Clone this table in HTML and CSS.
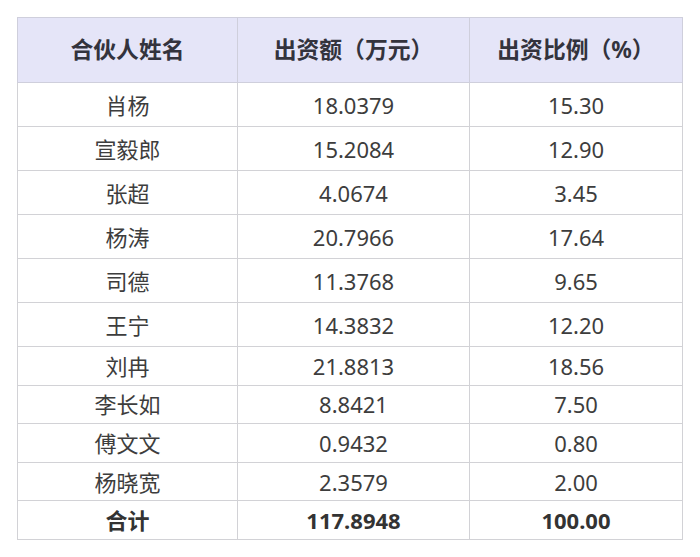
FILE: index.html
```html
<!DOCTYPE html>
<html lang="zh">
<head>
<meta charset="utf-8">
<title>合伙人出资</title>
<link rel="stylesheet" href="styles.css">
</head>
<body>
<table class="tbl">
  <colgroup>
    <col class="c1"><col class="c2"><col class="c3">
  </colgroup>
  <thead>
    <tr class="head"><th>合伙人姓名</th><th>出资额（万元）</th><th>出资比例（%）</th></tr>
  </thead>
  <tbody>
    <tr class="tall"><td>肖杨</td><td>18.0379</td><td>15.30</td></tr>
    <tr class="tall"><td>宣毅郎</td><td>15.2084</td><td>12.90</td></tr>
    <tr class="tall"><td>张超</td><td>4.0674</td><td>3.45</td></tr>
    <tr class="tall"><td>杨涛</td><td>20.7966</td><td>17.64</td></tr>
    <tr class="tall"><td>司德</td><td>11.3768</td><td>9.65</td></tr>
    <tr class="tall"><td>王宁</td><td>14.3832</td><td>12.20</td></tr>
    <tr class="short"><td>刘冉</td><td>21.8813</td><td>18.56</td></tr>
    <tr class="short"><td>李长如</td><td>8.8421</td><td>7.50</td></tr>
    <tr class="short"><td>傅文文</td><td>0.9432</td><td>0.80</td></tr>
    <tr class="short"><td>杨晓宽</td><td>2.3579</td><td>2.00</td></tr>
    <tr class="short total"><td>合计</td><td>117.8948</td><td>100.00</td></tr>
  </tbody>
</table>
</body>
</html>
```
FILE: styles.css
```css
html, body {
  margin: 0;
  background: #ffffff;
}
body {
  padding: 17px 0 0 17px;
  font-family: "Noto Sans", "Noto Sans CJK SC", sans-serif;
  color: #3d3d3d;
}
.tbl {
  border-collapse: collapse;
  width: 666px;
  table-layout: fixed;
  font-size: 22px;
}
.c1 { width: 220px; }
.c2 { width: 232px; }
.c3 { width: 213px; }
.tbl th, .tbl td {
  border: 1px solid #d2d2d6;
  text-align: center;
  vertical-align: middle;
  padding: 0;
  line-height: 1;
}
.tbl th {
  background: #e5e5f8;
  font-weight: 700;
  font-size: 22.8px;
  color: #33333d;
  border-color: #cfcfdc;
}
.head { height: 65px; }
.tall { height: 44px; }
.short { height: 38.6px; }
.total td {
  font-weight: 700;
  color: #333333;
}
```
